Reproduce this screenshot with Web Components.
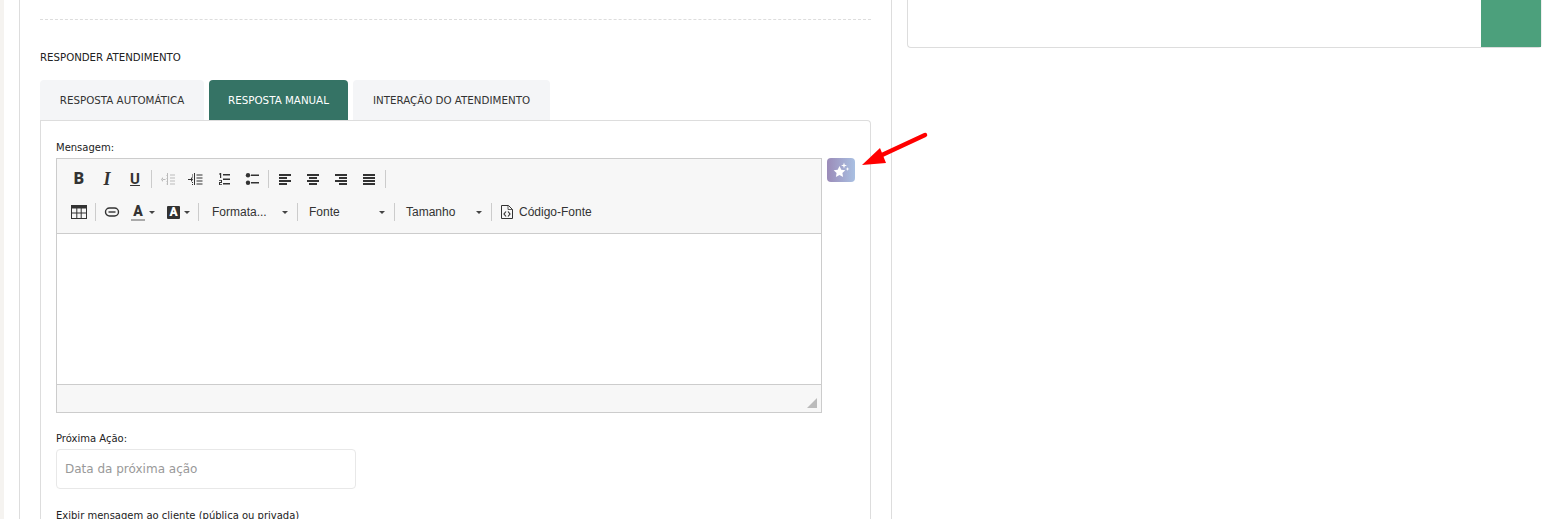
<!DOCTYPE html>
<html lang="pt">
<head>
<meta charset="utf-8">
<title>Responder atendimento</title>
<style>
  html, body { margin: 0; height: 519px; overflow: hidden; background: #fff; }
</style>
</head>
<body>

<atend-page>
  <reply-card slot="main"></reply-card>
  <side-card slot="side"></side-card>
</atend-page>

<script>
// page frame: cream strip, main column, side column
class AtendPage extends HTMLElement {
  constructor() {
    super()
    this.attachShadow({ mode: 'open' }).innerHTML = `
    <style>
      :host { display: flex; height: 519px; overflow: hidden; background: #fff; font-family: "DejaVu Sans", sans-serif; }
      .strip { width: 4px; background: #f5f3f0; flex: none; }
      .main { width: 873px; margin-left: 15px; flex: none; }
      .side { width: 635px; margin-left: 15px; flex: none; }
    </style>
    <div class="strip"></div>
    <div class="main"><slot name="main"></slot></div>
    <div class="side"><slot name="side"></slot></div>
    `
  }
}

class SideCard extends HTMLElement {
  constructor() {
    super()
    this.attachShadow({ mode: 'open' }).innerHTML = `
    <style>
      :host { display: flex; justify-content: flex-end; height: 47px; width: 633px; border: 1px solid #ddd; border-top: 0; border-right-color: #eee; border-radius: 0 0 4px 4px; }
      .block { width: 60px; background: #4ca07c; }
    </style>
    <div class="block"></div>
    `
  }
}

class ToolBtn extends HTMLElement {
  constructor() {
    super()
    this.attachShadow({ mode: 'open' }).innerHTML = `
    <style>
      :host { display: flex; align-items: center; justify-content: center; width: 28px; height: 28px; flex: none; color: #333; }
      ::slotted(svg) { display: block; }
    </style>
    <slot></slot>
    `
  }
}

class ToolSelect extends HTMLElement {
  constructor() {
    super()
    this.attachShadow({ mode: 'open' }).innerHTML = `
    <style>
      :host { display: flex; align-items: center; justify-content: space-between; box-sizing: border-box; width: 92px; height: 28px; padding: 0 7px 0 9px; flex: none; font: 12px "Liberation Sans", Arial, sans-serif; color: #333; }
      .caret { width: 0; height: 0; border: 3px solid transparent; border-top: 3px solid #444; border-bottom: 0; }
    </style>
    <span><slot></slot></span><span class="caret"></span>
    `
  }
}

class RichEditor extends HTMLElement {
  constructor() {
    super()
    this.attachShadow({ mode: 'open' }).innerHTML = `
    <style>
      :host { display: block; width: 766px; box-sizing: border-box; border: 1px solid #ccc; background: #fff; }
      .bar { background: #f7f7f7; border-bottom: 1px solid #ccc; height: 75px; box-sizing: border-box; padding: 6px 0 0 8px; }
      .row { display: flex; align-items: center; height: 28px; }
      .row + .row { margin-top: 5px; }
      .sep { width: 1px; height: 18px; background: #ccc; margin: 0 2px; flex: none; }
      .body { height: 150px; }
      .status { height: 27px; background: #f7f7f7; border-top: 1px solid #ccc; position: relative; }
      .grip { position: absolute; right: 4px; bottom: 4px; width: 0; height: 0; border-style: solid; border-width: 0 0 10px 10px; border-color: transparent transparent #bbb transparent; }
      .split { display: flex; align-items: center; height: 28px; flex: none; color: #333; box-sizing: border-box; width: 35px; }
      .caret { width: 0; height: 0; border: 3px solid transparent; border-top: 3px solid #444; border-bottom: 0; flex: none; }
      .a { width: 14px; margin: 0 1px; height: 15px; border-bottom: 2px solid #aaa; text-align: center; font: 900 14px/14px Roboto, sans-serif; color: #333; }
      .abg { width: 13px; height: 13px; background: #333; border-radius: 1px; color: #fff; font: 900 12px/13px Roboto, sans-serif; text-align: center; }
      .code { display: flex; align-items: center; gap: 5px; font: 12px "Liberation Sans", Arial, sans-serif; color: #333; margin-left: 6px; }
      .b { font: 900 16px/16px Roboto, sans-serif; }
      .i { font: italic bold 18px/16px "Liberation Serif", serif; }
      .u { font: bold 15px/16px Roboto, sans-serif; text-decoration: underline; }
    </style>
    <div class="bar">
      <div class="row">
        <tool-btn><span class="b">B</span></tool-btn>
        <tool-btn><span class="i">I</span></tool-btn>
        <tool-btn><span class="u">U</span></tool-btn>
        <div class="sep"></div>
        <tool-btn>
          <svg width="16" height="16" viewBox="0 0 16 16" fill="#bbb"><path d="M7 2h1v12H7zM10 3.500h5v1h-5zM10 6.500h5v1h-5zM10 9.500h5v1h-5zM10 12.500h5v1h-5z"/><path d="M2.500 8h3v1h-3zM3 6 1 8.500 3 11z"/><path d="M6 4h.800v1H6zM6 7h.800v1H6zM6 10h.800v1H6zM6 12.500h.800v1H6z" opacity=".6"/></svg>
        </tool-btn>
        <tool-btn>
          <svg width="16" height="16" viewBox="0 0 16 16" fill="#333"><path d="M6 2h1v12H6zM8.500 3.500h6v1h-6zM8.500 6.500h6v1h-6zM8.500 9.500h6v1h-6zM8.500 12.500h6v1h-6z"/><path d="M0 8h3v1H0zM3 6l2 2.500L3 11z"/><path d="M4 3.500h1v1H4zM4 5.500h1v1H4zM4 11h1v1H4zM4 13h1v1H4z"/></svg>
        </tool-btn>
        <tool-btn>
          <svg width="16" height="16" viewBox="0 0 16 16" fill="#333"><path d="M7 3h7v1.500H7zM7 7.500h7v1.500H7zM7 12h7v1.500H7z"/><path d="M4 2h1.200v5H4zM3 2.500h1v1H3z"/><path d="M3 9h3v3H4v1.200h2v.8H3v-2.900h2V9.800H3z"/></svg>
        </tool-btn>
        <tool-btn>
          <svg width="16" height="16" viewBox="0 0 16 16" fill="#333"><path d="M7 3.500h8v1.500H7zM7 11h8v1.500H7z"/><circle cx="4" cy="4.300" r="2.200"/><circle cx="4" cy="11.700" r="2.200"/></svg>
        </tool-btn>
        <div class="sep"></div>
        <tool-btn><svg width="16" height="16" viewBox="0 0 16 16" fill="#333"><path d="M2 3h12v2H2zM2 6h8v2H2zM2 9h12v2H2zM2 12h8v2H2z"/></svg></tool-btn>
        <tool-btn><svg width="16" height="16" viewBox="0 0 16 16" fill="#333"><path d="M2 3h12v2H2zM4 6h8v2H4zM2 9h12v2H2zM4 12h8v2H4z"/></svg></tool-btn>
        <tool-btn><svg width="16" height="16" viewBox="0 0 16 16" fill="#333"><path d="M2 3h12v2H2zM6 6h8v2H6zM2 9h12v2H2zM6 12h8v2H6z"/></svg></tool-btn>
        <tool-btn><svg width="16" height="16" viewBox="0 0 16 16" fill="#333"><path d="M2 3h12v2H2zM2 6h12v2H2zM2 9h12v2H2zM2 12h12v2H2z"/></svg></tool-btn>
        <div class="sep"></div>
      </div>
      <div class="row">
        <tool-btn>
          <svg width="16" height="16" viewBox="0 0 16 16"><path d="M0 1h16v14H0z" fill="#333"/><path d="M1 4.500h4.300v4H1zM6.300 4.500h3.400v4H6.300zM10.700 4.500H15v4h-4.300zM1 9.500h4.300V14H1zM6.300 9.500h3.400V14H6.300zM10.700 9.500H15V14h-4.300z" fill="#f7f7f7"/></svg>
        </tool-btn>
        <div class="sep"></div>
        <tool-btn>
          <svg width="16" height="16" viewBox="0 0 16 16" fill="none" stroke="#333"><rect x="1.500" y="4" width="13" height="8" rx="4" stroke-width="1.400"/><path d="M4.500 8h7" stroke-width="1.400"/></svg>
        </tool-btn>
        <div class="split" style="padding-left:4px;gap:3px">
          <span class="a">A</span><span class="caret"></span>
        </div>
        <div class="split" style="padding-left:6px;gap:4px">
          <span class="abg">A</span><span class="caret"></span>
        </div>
        <div class="sep"></div>
        <tool-select style="margin-left:2px">Formata...</tool-select>
        <div class="sep"></div>
        <tool-select>Fonte</tool-select>
        <div class="sep"></div>
        <tool-select>Tamanho</tool-select>
        <div class="sep"></div>
        <div class="code">
          <svg width="14" height="16" viewBox="0 0 14 16" fill="none" stroke="#333"><path d="M1.500 1.500h7l4 4v9h-11z"/><path d="M8 1.500v4h4.500" stroke-width=".8"/><path d="M6 7.500 4 10l2 2.500M8 7.500l2 2.500-2 2.500" stroke-width="1.200"/></svg>
          <span>Código-Fonte</span>
        </div>
      </div>
    </div>
    <div class="body"></div>
    <div class="status"><span class="grip"></span></div>
    `
  }
}

class MagicButton extends HTMLElement {
  constructor() {
    super()
    this.attachShadow({ mode: 'open' }).innerHTML = `
    <style>
      :host { display: flex; align-items: center; justify-content: center; width: 28px; height: 24px; border-radius: 4px; background: linear-gradient(90deg, #9b8bb8, #a9c0e2); flex: none; }
      svg { display: block; }
    </style>
    <svg width="18" height="18" viewBox="0 0 18 18" fill="#fff">
      <path d="M7.500 5 9.300 8.800l4 .5-2.900 2.800.7 4-3.600-2-3.600 2 .7-4-2.900-2.800 4-.5z"/>
      <path d="M12 1.500 12.700 3.800 15 4.500 12.700 5.200 12 7.500 11.300 5.200 9 4.500 11.300 3.800z"/>
      <path d="M15.500 6 16 7.500 17.500 8 16 8.500 15.500 10 15 8.500 13.500 8 15 7.500z"/>
    </svg>
    `
  }
}

class ReplyCard extends HTMLElement {
  constructor() {
    super()
    this.attachShadow({ mode: 'open' }).innerHTML = `
    <style>
      :host { display: block; box-sizing: border-box; width: 873px; height: 519px; border: 1px solid #ddd; border-width: 0 1px; padding: 19px 20px 0; position: relative; font-family: "DejaVu Sans", sans-serif; }
      .dash { border-top: 1px dashed #ddd; height: 0; }
      h4 { margin: 32px 0 0; font-size: 10.200px; line-height: 12px; font-weight: 400; color: #222; }
      .tabs { display: flex; gap: 5px; margin-top: 16px; height: 40px; }
      .tab { display: flex; align-items: center; justify-content: center; background: #f4f5f7; border-radius: 4px 4px 0 0; font-size: 10.300px; color: #333; width: 164px; }
      .tab.on { background: #357365; color: #fff; width: 139px; }
      .tab.wide { width: 197px; }
      .panel { border: 1px solid #ddd; border-radius: 0 4px 0 0; border-bottom: 0; padding: 21px 15px 0; height: 399px; box-sizing: border-box; }
      label { display: block; font-size: 10px; line-height: 12px; color: #222; }
      .editor-row { display: flex; gap: 5px; margin-top: 4px; }
      .field-label { margin-top: 20px; }
      .input { box-sizing: border-box; width: 300px; height: 40px; margin-top: 4px; padding: 0 8px; display: flex; align-items: center; border: 1px solid #e8e8e8; border-radius: 4px; font-size: 12px; color: #999; }
      .last { margin-top: 21px; }
      .arrow { position: absolute; left: 842px; top: 130px; }
    </style>
    <div class="dash"></div>
    <h4>RESPONDER ATENDIMENTO</h4>
    <div class="tabs">
      <div class="tab">RESPOSTA AUTOMÁTICA</div>
      <div class="tab on">RESPOSTA MANUAL</div>
      <div class="tab wide">INTERAÇÃO DO ATENDIMENTO</div>
    </div>
    <div class="panel">
      <label>Mensagem:</label>
      <div class="editor-row">
        <rich-editor></rich-editor>
        <magic-button></magic-button>
      </div>
      <label class="field-label">Próxima Ação:</label>
      <div class="input">Data da próxima ação</div>
      <label class="last">Exibir mensagem ao cliente (pública ou privada)</label>
    </div>
    <svg class="arrow" width="70" height="40" viewBox="0 0 70 40">
      <path d="M63 5 20 25" stroke="#f00" stroke-width="4.500" stroke-linecap="round" fill="none"/>
      <path d="M0 35 18 18 24 33z" fill="#f00"/>
    </svg>
    `
  }
}

customElements.define('atend-page', AtendPage)
customElements.define('side-card', SideCard)
customElements.define('tool-btn', ToolBtn)
customElements.define('tool-select', ToolSelect)
customElements.define('rich-editor', RichEditor)
customElements.define('magic-button', MagicButton)
customElements.define('reply-card', ReplyCard)
</script>
</body>
</html>
